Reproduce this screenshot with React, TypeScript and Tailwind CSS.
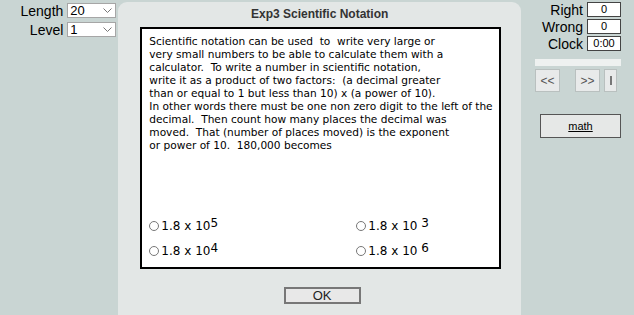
import React from "react";

const SANS = { fontFamily: '"Liberation Sans", Arial, sans-serif' };
const BODY = { fontFamily: '"DejaVu Sans", "Lucida Sans", sans-serif' };

const TEXT = [
  "Scientific notation can be used  to  write very large or",
  "very small numbers to be able to calculate them with a",
  "calculator.  To write a number in scientific notation,",
  "write it as a product of two factors:  (a decimal greater",
  "than or equal to 1 but less than 10) x (a power of 10).",
  "In other words there must be one non zero digit to the left of the",
  "decimal.  Then count how many places the decimal was",
  "moved.  That (number of places moved) is the exponent",
  "or power of 10.  180,000 becomes",
];

function Select({ value }: { value: string }) {
  return (
    <div className="w-[49px] h-[15px] bg-white border border-[#a6a6a6] flex items-center justify-between pl-[2px] pr-[3px]">
      <span className="text-[13px] leading-none text-black">{value}</span>
      <svg width="9" height="6" viewBox="0 0 9 6">
        <path d="M0.5 0.5 L4.5 4.5 L8.5 0.5" fill="none" stroke="#777" strokeWidth="1" />
      </svg>
    </div>
  );
}

function Option({ exp, gap }: { exp: string; gap?: boolean }) {
  return (
    <div className="flex items-center h-[18px] text-[12px] text-black" style={BODY}>
      <span className="w-[10px] h-[10px] rounded-full border border-[#777] mr-[2px]" />
      <span className="whitespace-pre">1.8 x 10{gap ? " " : ""}</span>
      <span className="text-[12px] self-start leading-none">{exp}</span>
    </div>
  );
}

function StatRow({ label, value }: { label: string; value: string }) {
  return (
    <div className="flex items-center justify-end gap-[4px] h-[17px]">
      <span className="text-[14px] leading-none text-black">{label}</span>
      <div className="w-[34px] h-[15px] bg-white border border-[#444] flex items-center justify-center text-[11px] leading-none">
        {value}
      </div>
    </div>
  );
}

export default function App() {
  return (
    <div className="w-[634px] h-[315px] bg-[#c9d5d3] flex overflow-hidden" style={SANS}>
      {/* Left settings */}
      <div className="w-[119px] pt-[3px] flex flex-col gap-[4px]">
        <div className="flex items-center justify-end gap-[4px] pr-[2px]">
          <span className="text-[14px] leading-none text-black">Length</span>
          <Select value="20" />
        </div>
        <div className="flex items-center justify-end gap-[4px] pr-[2px]">
          <span className="text-[14px] leading-none text-black">Level</span>
          <Select value="1" />
        </div>
      </div>

      {/* Center panel */}
      <div className="w-[405px] h-[313px] mt-[2px] bg-[#e3e7e6] rounded-t-[9px] flex flex-col">
        <div className="h-[24px] flex items-center justify-center text-[12px] font-bold text-[#333]">
          Exp3 Scientific Notation
        </div>
        <div className="ml-[22px] mt-[1px] w-[361px] h-[242px] bg-white border-2 border-black flex flex-col pl-[7px] pt-[6px]">
          <div className="text-[10.6px] leading-[13px] text-black whitespace-pre" style={BODY}>
            {TEXT.map((l, i) => (
              <div key={i}>{l}</div>
            ))}
          </div>
          <div className="mt-auto mb-[7px] grid grid-cols-[207px_1fr] gap-y-[7px]">
            <Option exp="5" />
            <Option exp="3" gap />
            <Option exp="4" />
            <Option exp="6" gap />
          </div>
        </div>
        <div className="flex justify-center mt-[18px] pl-[5px]">
          <div className="w-[77px] h-[17px] bg-[#e8e8e8] border-2 border-[#777] flex items-center justify-center text-[13px] leading-none text-[#222]">
            OK
          </div>
        </div>
      </div>

      {/* Right stats */}
      <div className="flex-1 flex flex-col pt-[1px] pr-[13px]">
        <StatRow label="Right" value="0" />
        <StatRow label="Wrong" value="0" />
        <StatRow label="Clock" value="0:00" />
        <div className="ml-[14px] mt-[7px] h-[7px] bg-[#eef1f0]" />
        <div className="ml-[14px] mt-[3px] flex gap-[15px]">
          <div className="w-[25px] h-[23px] bg-[#e8eaea] border border-[#b9c0bf] flex items-center justify-center text-[12px] text-[#555]">&lt;&lt;</div>
          <div className="flex gap-[4px]">
            <div className="w-[25px] h-[23px] bg-[#e8eaea] border border-[#b9c0bf] flex items-center justify-center text-[12px] text-[#555]">&gt;&gt;</div>
            <div className="w-[13px] h-[23px] bg-[#e8eaea] border border-[#b9c0bf] flex items-center justify-center">
              <span className="w-[2px] h-[9px] bg-[#777]" />
            </div>
          </div>
        </div>
        <div className="ml-[19px] mt-[22px] w-[81px] h-[24px] bg-[#e6e8e7] border border-[#555] flex items-center justify-center text-[11px] underline text-black">
          math
        </div>
      </div>
    </div>
  );
}
